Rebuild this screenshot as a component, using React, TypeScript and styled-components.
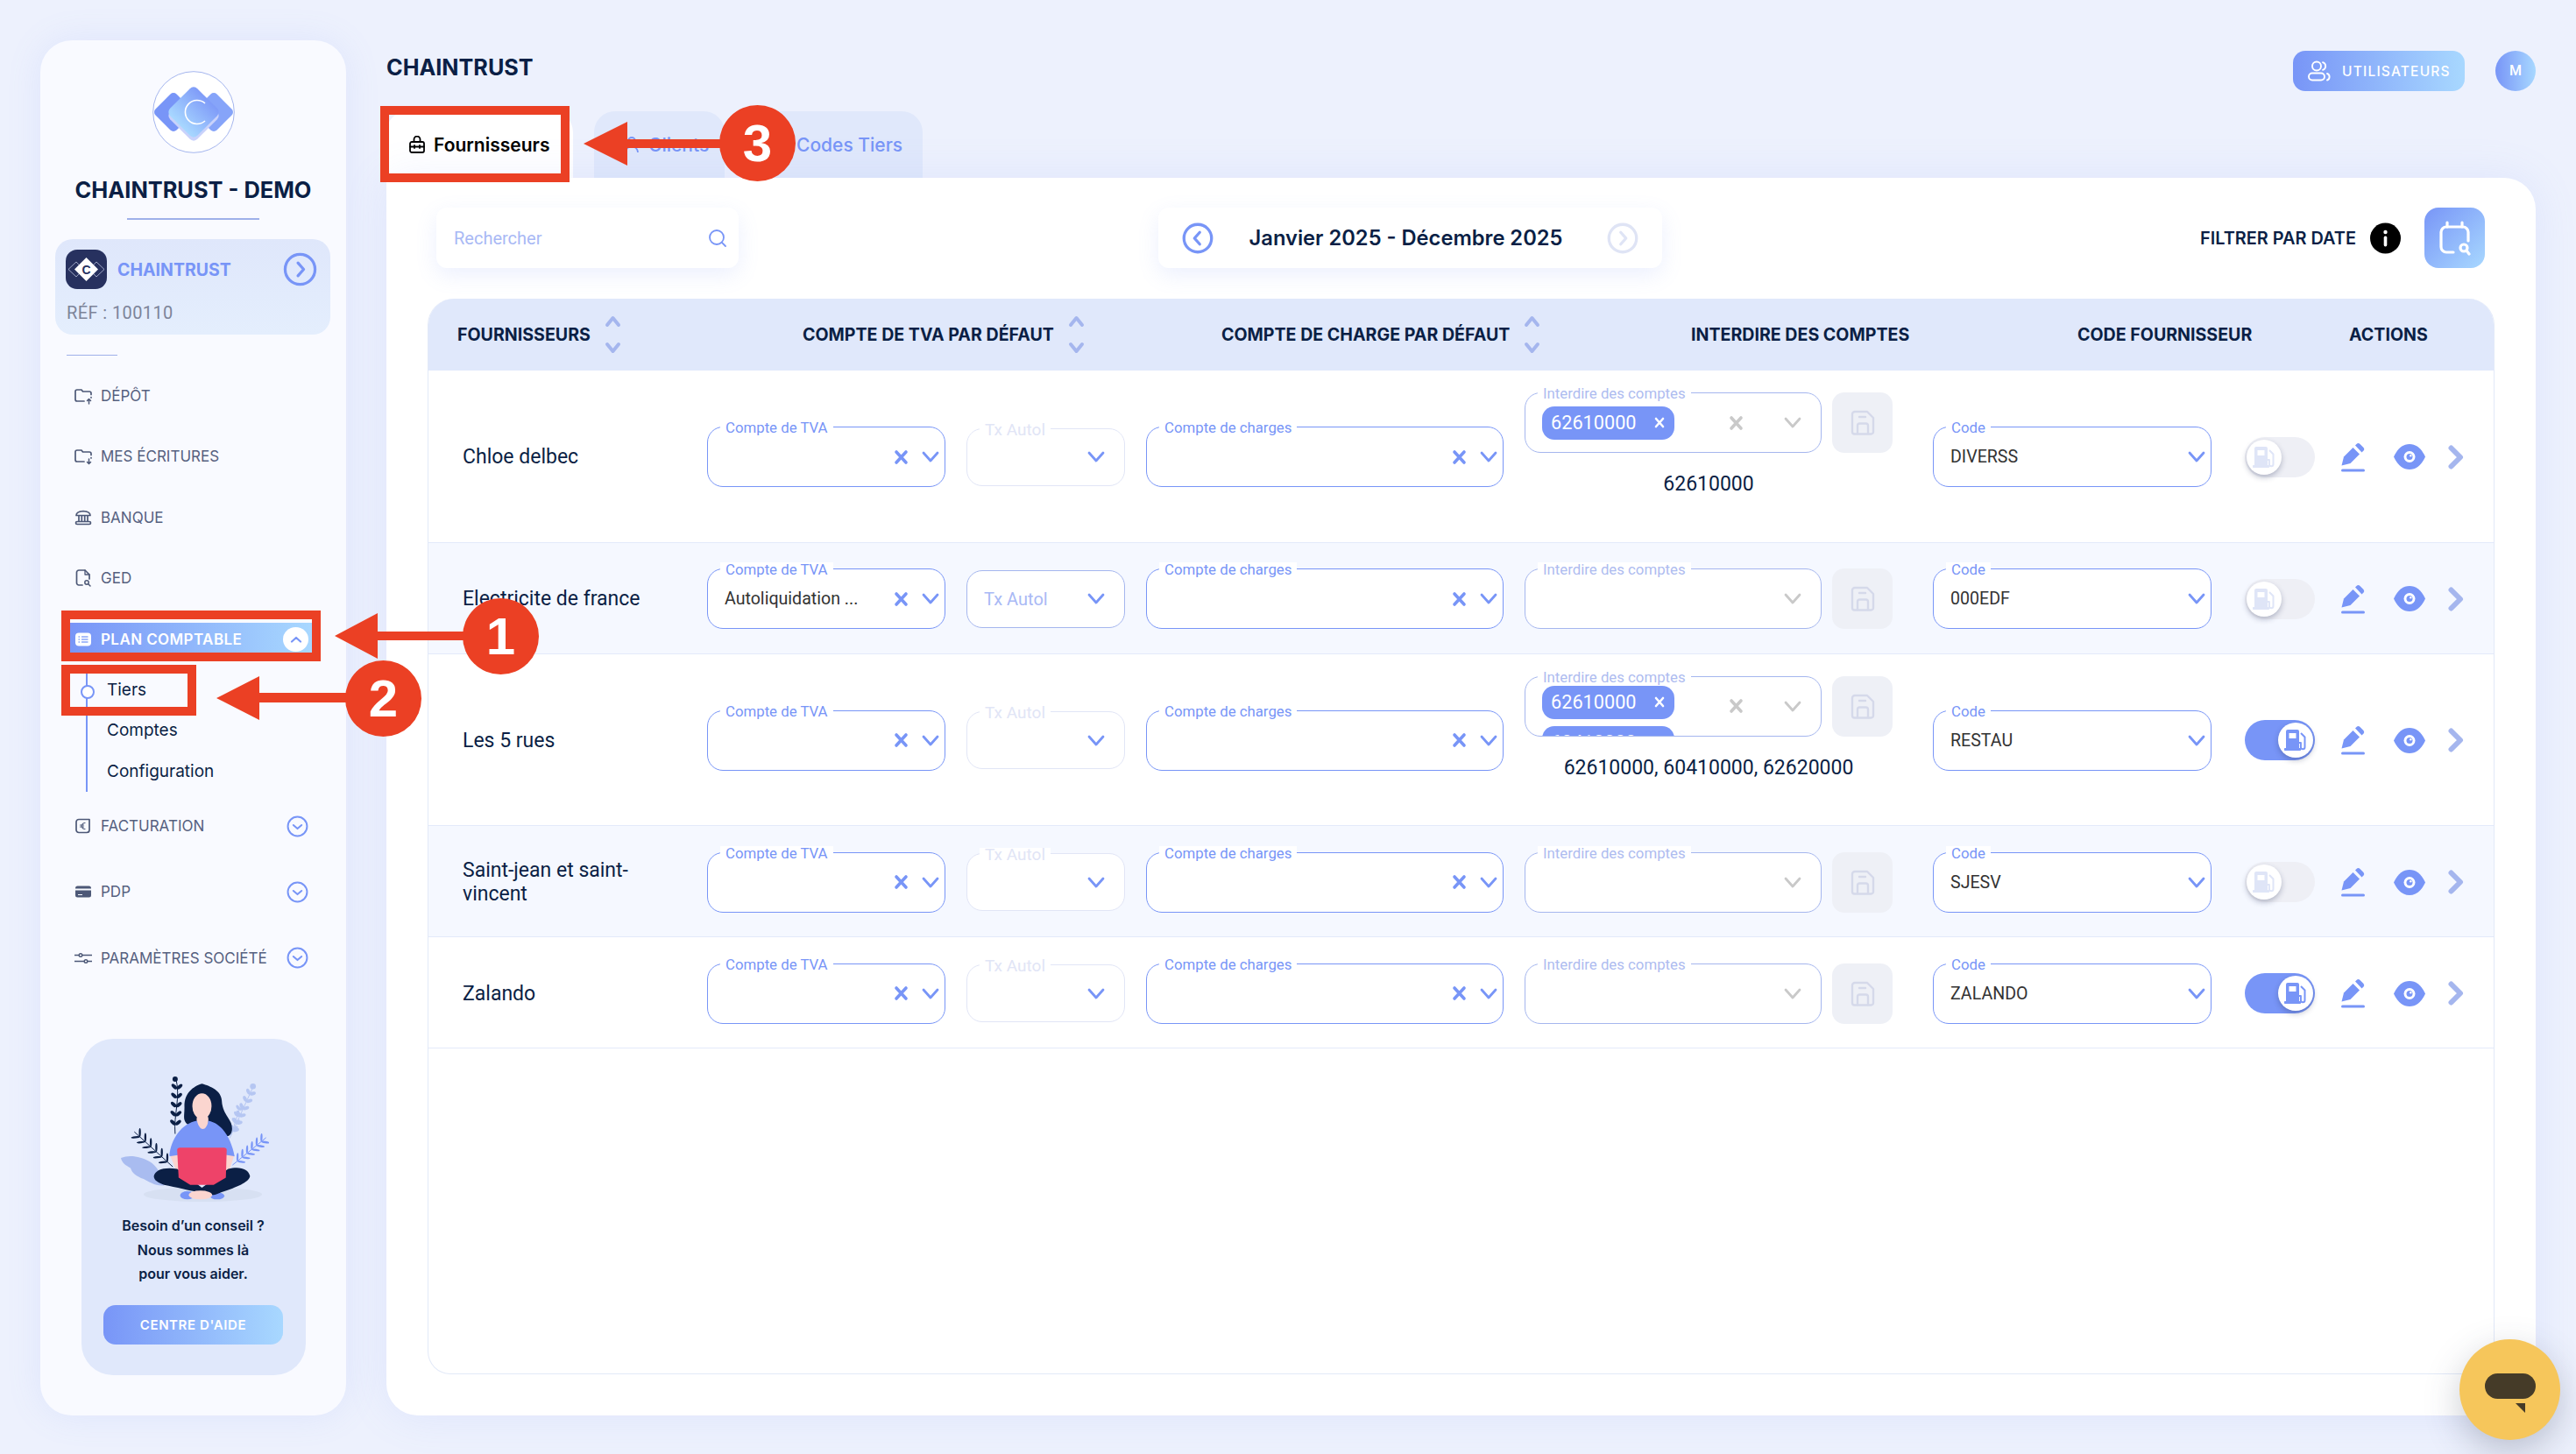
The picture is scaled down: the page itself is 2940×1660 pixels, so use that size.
import React from "react";
import styled, {createGlobalStyle} from "styled-components";
import {Search} from "lucide-react";

const BLUE = "#7895f7";
const SOFT = "#a5b6ee";
const FAINT = "#e1e5f6";
const NAVY = "#0b1f45";
const GRAD = "linear-gradient(90deg, #7895f7, #a8d8ff)";
const RED = "#eb4024";
const HEAD_FONT = `"Inter", "Liberation Sans", sans-serif`;

type Row = {
    name: string
    tva?: string
    autolActive?: boolean
    chips?: string[]
    summary?: string
    code: string
    on?: boolean
}

const rows: Row[] = [
    {name: "Chloe delbec", chips: ["62610000"], summary: "62610000", code: "DIVERSS"},
    {name: "Electricite de france", tva: "Autoliquidation ...", autolActive: true, code: "000EDF"},
    {name: "Les 5 rues", chips: ["62610000", "60410000"], summary: "62610000, 60410000, 62620000", code: "RESTAU", on: true},
    {name: "Saint-jean et saint-vincent", code: "SJESV"},
    {name: "Zalando", code: "ZALANDO", on: true},
];

/* ---------- icons ---------- */

const LogoMark = () => (
    <svg width="94" height="94" viewBox="0 0 94 94">
        <defs>
            <linearGradient id="logoMain" x1="0" y1="0" x2="0" y2="1">
                <stop offset="0" stopColor="#7f9bf8"/>
                <stop offset="1" stopColor="#a8d8ff"/>
            </linearGradient>
        </defs>
        <circle cx="47" cy="47" r="46.3" fill="#fff" stroke="#a5b6ee" strokeWidth="1"/>
        <rect x="7" y="30" width="34" height="34" rx="5" transform="rotate(45 24 47)" fill="#7895f7"/>
        <rect x="53" y="30" width="34" height="34" rx="5" transform="rotate(45 70 47)" fill="#86a4f9"/>
        <rect x="25" y="29" width="44" height="44" rx="6" transform="rotate(45 47 51)" fill="#c9d2fb"/>
        <rect x="25" y="25" width="44" height="44" rx="6" transform="rotate(45 47 47)" fill="url(#logoMain)"/>
        <path d="M60 37 A 13.5 13.5 0 1 0 60 57" fill="none" stroke="#fff" strokeWidth="1.6"/>
    </svg>
);

const CompanyMark = () => (
    <svg width="47" height="45" viewBox="0 0 47 45">
        <rect width="47" height="45" rx="13" fill="#27315f"/>
        <path d="M12 14 L3 22.500 L12 31 L20 22.500Z M35 14 L44 22.500 L35 31 L27 22.500Z" fill="none" stroke="#cfd6ee" strokeWidth="0.7"/>
        <path d="M23.500 9 L37 22.500 L23.500 36 L10 22.500Z" fill="#fff"/>
        <text x="23.500" y="27.500" textAnchor="middle" fontFamily="Liberation Sans" fontWeight="700" fontSize="14" fill="#27315f">C</text>
    </svg>
);

const CircleChevron = ({dir, size, color, stroke}: {dir: "up" | "down" | "left" | "right", size: number, color: string, stroke: number}) => {
    const paths = {
        up: "M7.500 13.500 L12 9.500 L16.500 13.500",
        down: "M7.500 10.500 L12 14.500 L16.500 10.500",
        left: "M13.500 7.500 L9.500 12 L13.500 16.500",
        right: "M10.500 7.500 L14.500 12 L10.500 16.500",
    };
    return (
        <svg width={size} height={size} viewBox="0 0 24 24" fill="none" stroke={color} strokeWidth={stroke} strokeLinecap="round" strokeLinejoin="round">
            <circle cx="12" cy="12" r="10.500"/>
            <path d={paths[dir]}/>
        </svg>
    );
};

const navStroke = {fill: "none", stroke: "#4d5877", strokeWidth: 1.7, strokeLinecap: "round", strokeLinejoin: "round"} as const;

const FolderUp = () => (
    <svg width="20" height="20" viewBox="0 0 20 20" {...navStroke}>
        <path d="M11 16H3a2 2 0 0 1-2-2V5a2 2 0 0 1 2-2h5l1.500 2H17a2 2 0 0 1 2 2v1.500"/>
        <path d="M16.500 19v-5M14.500 15.500l2-2 2 2" strokeWidth="1.500"/>
        <path d="M19 11.500v.5"/>
    </svg>
);

const FolderDown = () => (
    <svg width="20" height="20" viewBox="0 0 20 20" {...navStroke}>
        <path d="M11 16H3a2 2 0 0 1-2-2V5a2 2 0 0 1 2-2h5l1.500 2H17a2 2 0 0 1 2 2v1.500"/>
        <path d="M16.500 13v5M14.500 16.500l2 2 2-2" strokeWidth="1.500"/>
        <path d="M19 11.500v.5"/>
    </svg>
);

const BankIcon = () => (
    <svg width="20" height="20" viewBox="0 0 20 20" {...navStroke}>
        <path d="M2 7.500 Q2 3 10 2.500 Q18 3 18 7.500Z"/>
        <path d="M5 8v6M8.300 8v6M11.700 8v6M15 8v6"/>
        <rect x="1.500" y="14.500" width="17" height="3" rx="1.500"/>
    </svg>
);

const DocSearch = () => (
    <svg width="20" height="22" viewBox="0 0 20 22" {...navStroke}>
        <path d="M9 19H5a2.500 2.500 0 0 1-2.500-2.500v-12A2.500 2.500 0 0 1 5 2h7l5 5v5"/>
        <path d="M12 2v5h5" strokeWidth="1.300"/>
        <circle cx="14" cy="16" r="2.200" strokeWidth="1.500"/>
        <path d="M16 18l2 2" strokeWidth="1.500"/>
    </svg>
);

const ListIcon = () => (
    <svg width="20" height="18" viewBox="0 0 20 18">
        <rect x="1" y="1.500" width="18" height="15" rx="4" fill="#fff"/>
        <path d="M4.500 6h1.500M4.500 9h1.500M4.500 12h1.500M8 6h7.500M8 9h7.500M8 12h7.500" stroke="#8ba7f9" strokeWidth="1.500"/>
    </svg>
);

const DocEuro = () => (
    <svg width="20" height="20" viewBox="0 0 20 20" {...navStroke}>
        <path d="M5 2.500h7l5 0a1.500 1.500 0 0 1 0 0v12a3 3 0 0 1-3 3H5a3 3 0 0 1-3-3v-9a3 3 0 0 1 3-3Z"/>
        <path d="M12 6.500a3.500 3.500 0 1 0 0 7M6.500 9h4M6.500 11h4" strokeWidth="1.200"/>
    </svg>
);

const CardIcon = () => (
    <svg width="20" height="16" viewBox="0 0 20 16">
        <path d="M1 4a2.500 2.500 0 0 1 2.500-2.500h13A2.500 2.500 0 0 1 19 4v.5H1Z" fill="#4d5877"/>
        <path d="M1 6.500h18V12a2.500 2.500 0 0 1-2.500 2.500h-13A2.500 2.500 0 0 1 1 12Zm3 4.500v1h5v-1Z" fill="#4d5877" fillRule="evenodd"/>
    </svg>
);

const SliderIcon = () => (
    <svg width="20" height="14" viewBox="0 0 20 14" fill="none" stroke="#4d5877" strokeWidth="1.400">
        <path d="M0 3.500h5M9 3.500h11M0 10.500h11M15 10.500h5"/>
        <circle cx="7" cy="3.500" r="1.800"/>
        <circle cx="13" cy="10.500" r="1.800"/>
    </svg>
);

const BagIcon = () => (
    <svg width="18" height="20" viewBox="0 0 18 20" fill="none" stroke="#000" strokeWidth="1.800" strokeLinejoin="round" strokeLinecap="round">
        <path d="M5.500 7V4a3.500 3.500 0 0 1 7 0v3"/>
        <path d="M3 7h12a2 2 0 0 1 2 2v8a2 2 0 0 1-2 2H3a2 2 0 0 1-2-2V9a2 2 0 0 1 2-2Z"/>
        <path d="M1 12.500h16M6 11v3M12 11v3"/>
    </svg>
);

const UsersIcon = () => (
    <svg width="28" height="24" viewBox="0 0 28 24" fill="none" stroke="#fff" strokeWidth="1.900" strokeLinecap="round">
        <circle cx="11" cy="6.500" r="5"/>
        <rect x="2" y="14.500" width="18" height="8" rx="4"/>
        <path d="M18 2.200a4.500 4.500 0 0 1 0 8.600M23 15a4 4 0 0 1 0 7.500"/>
    </svg>
);

const CalendarSearch = () => (
    <svg width="36" height="42" viewBox="0 0 36 42" fill="none" stroke="#fff" strokeWidth="3.200" strokeLinecap="round" strokeLinejoin="round">
        <path d="M16 37H8a6 6 0 0 1-6-6V14a6 6 0 0 1 6-6h19a6 6 0 0 1 6 6v10"/>
        <path d="M9 3v5M26 3v5"/>
        <circle cx="28" cy="32" r="4"/>
        <path d="M31 35l3 4"/>
    </svg>
);

const InfoDot = () => (
    <svg width="35" height="36" viewBox="0 0 35 36">
        <circle cx="17.500" cy="18" r="17.500" fill="#000"/>
        <circle cx="17.500" cy="11" r="2.200" fill="#fff"/>
        <rect x="15.700" y="15.500" width="3.600" height="12" rx="1.800" fill="#fff"/>
    </svg>
);

const SortArrows = () => (
    <svg width="19" height="44" viewBox="0 0 19 44" fill="none" stroke="#a5b6ee" strokeWidth="4" strokeLinecap="round" strokeLinejoin="round">
        <path d="M3 11 L9.500 3 L16 11"/>
        <path d="M3 33 L9.500 41 L16 33"/>
    </svg>
);

const ClearX = ({color}: {color: string}) => (
    <svg width="17" height="18" viewBox="0 0 17 18" fill="none" stroke={color} strokeWidth="3.600" strokeLinecap="round">
        <path d="M3 3 L14 15M14 3 L3 15"/>
    </svg>
);

const Caret = ({color}: {color: string}) => (
    <svg width="20" height="13" viewBox="0 0 20 13" fill="none" stroke={color} strokeWidth="2.800" strokeLinecap="round" strokeLinejoin="round">
        <path d="M2 2 L10 11 L18 2"/>
    </svg>
);

const ChipX = () => (
    <svg width="12" height="13" viewBox="0 0 12 13" fill="none" stroke="#fff" strokeWidth="2.600" strokeLinecap="round">
        <path d="M2 2 L10 11M10 2 L2 11"/>
    </svg>
);

const SaveIcon = () => (
    <svg width="28" height="29" viewBox="0 0 28 29" fill="none" stroke="#d5d9ea" strokeWidth="2.400" strokeLinejoin="round" strokeLinecap="round">
        <path d="M5 2h14l7 7v16a2.500 2.500 0 0 1-2.500 2.500h-19A2.500 2.500 0 0 1 2 25V5a3 3 0 0 1 3-3Z"/>
        <path d="M8 27V18a2.500 2.500 0 0 1 2.500-2.500h7A2.500 2.500 0 0 1 20 18v9"/>
        <path d="M10 8h7"/>
    </svg>
);

const FuelIcon = ({color}: {color: string}) => (
    <svg width="28" height="28" viewBox="0 0 28 28" fill="none">
        <path d="M5 2h11a2 2 0 0 1 2 2v19H3V4a2 2 0 0 1 2-2Zm1.500 4v6h8V6Z" fill={color} fillRule="evenodd"/>
        <rect x="1" y="23" width="19" height="3" rx="0.800" fill={color}/>
        <path d="M20 6l4.500 4.500V22a2.300 2.300 0 0 1-4.600 0v-5H18" stroke={color} strokeWidth="2" strokeLinejoin="round"/>
    </svg>
);

const PencilIcon = () => (
    <svg width="27" height="34" viewBox="0 0 27 34" fill={BLUE}>
        <path d="M0.500 26.500 L3 16.500 L13.500 6 L21 13.500 L10.500 24 Z"/>
        <path d="M16 3.500 L17.500 2 Q19.500 0 21.500 2 L25.500 6 Q27 8 25.500 9.500 L23.500 11.500 Z"/>
        <rect x="0" y="30.500" width="27" height="3" rx="1.500"/>
    </svg>
);

const EyeIcon = () => (
    <svg width="36" height="29" viewBox="0 0 36 29">
        <path d="M0 14.500 C5 4 11 0 18 0 C25 0 31 4 36 14.500 C31 25 25 29 18 29 C11 29 5 25 0 14.500Z" fill={BLUE}/>
        <circle cx="18" cy="14.500" r="6.500" fill="#fff"/>
        <circle cx="18" cy="14.500" r="3.500" fill={BLUE}/>
        <circle cx="19.300" cy="13.200" r="1.200" fill="#fff"/>
    </svg>
);

const RowChevron = () => (
    <svg width="18" height="28" viewBox="0 0 18 28" fill="none" stroke="#a5b6ee" strokeWidth="6" strokeLinecap="round" strokeLinejoin="round">
        <path d="M3.500 3.500 L14 14 L3.500 24.500"/>
    </svg>
);

const sprigs = (x1: number, y1: number, x2: number, y2: number, count: number, len: number, fat: number, color: string) => {
    const dx = x2 - x1;
    const dy = y2 - y1;
    const base = Math.atan2(dy, dx) * 180 / Math.PI;
    return Array.from({length: count}, (_, i) => {
        const t = (i + 1) / (count + 1);
        const cx = x1 + dx * t;
        const cy = y1 + dy * t;
        return [-48, 48].map(a => (
            <ellipse key={`${i}${a}`} cx={len} cy={0} rx={len} ry={fat} fill={color}
                     transform={`translate(${cx} ${cy}) rotate(${base + a})`}/>
        ));
    });
};

const HelpArt = () => (
    <svg width="173" height="153" viewBox="40 70 520 460">
        <ellipse cx="333" cy="493" rx="203" ry="25" fill="#d7e0f2"/>
        <path d="M52 368 C80 355 120 362 150 380 C175 395 190 420 200 462 C170 465 150 450 130 440 C105 430 90 420 85 402 C70 395 55 385 52 368Z" fill="#a9bcf0"/>
        <path d="M425 300 L505 125" stroke="#b5c6f2" strokeWidth="3"/>
        {sprigs(425, 300, 505, 125, 6, 11, 6, "#b5c6f2")}
        <circle cx="505" cy="122" r="10" fill="#b5c6f2"/>
        <path d="M430 290 L465 180" stroke="#b5c6f2" strokeWidth="3"/>
        {sprigs(430, 290, 465, 180, 4, 9, 5, "#b5c6f2")}
        <path d="M435 392 L550 298" stroke={BLUE} strokeWidth="3"/>
        {sprigs(435, 392, 550, 298, 6, 14, 3.500, BLUE)}
        <path d="M230 398 L98 278" stroke={NAVY} strokeWidth="3"/>
        {sprigs(230, 398, 98, 278, 6, 15, 3.500, NAVY)}
        <path d="M238 285 C232 220 258 160 240 92" stroke={NAVY} strokeWidth="3" fill="none"/>
        {sprigs(238, 285, 245, 100, 5, 12, 6, NAVY)}
        <circle cx="238" cy="97" r="9" fill={NAVY}/>
        <path d="M330 113 C300 122 268 145 270 195 C270 225 262 240 285 255 L410 292 C432 298 438 270 430 248 C420 225 400 210 398 170 C395 135 360 122 330 113Z" fill={NAVY}/>
        <ellipse cx="330" cy="190" rx="33" ry="44" fill="#fbd5cf"/>
        <rect x="312" y="215" width="40" height="55" rx="18" fill="#fbd5cf"/>
        <path d="M218 360 C225 300 260 250 313 240 C322 278 345 278 352 240 C400 250 430 300 442 362 L410 372 L250 372Z" fill={BLUE}/>
        <path d="M222 362 L252 357 L262 420 L245 420Z M440 362 L412 357 L402 420 L420 420Z" fill="#fbd5cf"/>
        <ellipse cx="280" cy="496" rx="25" ry="14" fill={BLUE}/>
        <ellipse cx="382" cy="498" rx="25" ry="12" fill={BLUE}/>
        <path d="M165 430 C170 408 200 398 245 405 L330 470 L420 405 C460 395 490 405 495 430 C490 455 440 470 385 490 C365 498 355 495 345 485 L320 485 C290 480 240 468 200 460 C180 452 165 445 165 430Z" fill={NAVY}/>
        <ellipse cx="325" cy="495" rx="40" ry="15" fill="#fbd5cf"/>
        <path d="M245 340 Q245 332 255 332 L405 332 Q415 332 415 340 L412 435 L370 460 L290 460 L250 435Z" fill="#ee4369"/>
    </svg>
);

/* ---------- page ---------- */

export default function App() {
    return (
        <>
            <GlobalStyle/>
            <Page>
                <Sidebar>
                    <LogoMark/>
                    <BrandTitle>CHAINTRUST - DEMO</BrandTitle>
                    <BrandRule/>
                    <CompanyCard>
                        <CompanyTop>
                            <CompanyMark/>
                            <CompanyName>CHAINTRUST</CompanyName>
                            <CircleChevron dir="right" size={39} color={BLUE} stroke={2}/>
                        </CompanyTop>
                        <CompanyRef>RÉF : 100110</CompanyRef>
                    </CompanyCard>
                    <ShortRule/>
                    <NavList $gap={31.4} $top={27}>
                        <NavItem><NavIcon><FolderUp/></NavIcon><NavLabel>DÉPÔT</NavLabel></NavItem>
                        <NavItem><NavIcon><FolderDown/></NavIcon><NavLabel>MES ÉCRITURES</NavLabel></NavItem>
                        <NavItem><NavIcon><BankIcon/></NavIcon><NavLabel>BANQUE</NavLabel></NavItem>
                        <NavItem><NavIcon><DocSearch/></NavIcon><NavLabel>GED</NavLabel></NavItem>
                        <NavItem $active>
                            <NavIcon><ListIcon/></NavIcon>
                            <NavLabel $active>PLAN COMPTABLE</NavLabel>
                            <OpenPill>
                                <svg width="14" height="8" viewBox="0 0 14 8" fill="none" stroke={BLUE} strokeWidth="2.200" strokeLinecap="round" strokeLinejoin="round">
                                    <path d="M2 6.500 L7 2 L12 6.500"/>
                                </svg>
                            </OpenPill>
                        </NavItem>
                    </NavList>
                    <SubMenu>
                        <SubItem $current>Tiers</SubItem>
                        <SubItem>Comptes</SubItem>
                        <SubItem>Configuration</SubItem>
                    </SubMenu>
                    <NavList $gap={37.4} $top={20}>
                        <NavItem>
                            <NavIcon><DocEuro/></NavIcon><NavLabel>FACTURATION</NavLabel>
                            <NavCaret><CircleChevron dir="down" size={25} color={BLUE} stroke={1.900}/></NavCaret>
                        </NavItem>
                        <NavItem>
                            <NavIcon><CardIcon/></NavIcon><NavLabel>PDP</NavLabel>
                            <NavCaret><CircleChevron dir="down" size={25} color={BLUE} stroke={1.900}/></NavCaret>
                        </NavItem>
                        <NavItem>
                            <NavIcon><SliderIcon/></NavIcon><NavLabel>PARAMÈTRES SOCIÉTÉ</NavLabel>
                            <NavCaret><CircleChevron dir="down" size={25} color={BLUE} stroke={1.900}/></NavCaret>
                        </NavItem>
                    </NavList>
                    <HelpCard>
                        <HelpArt/>
                        <HelpText>Besoin d’un conseil ?<br/>Nous sommes là<br/>pour vous aider.</HelpText>
                        <HelpButton>CENTRE D'AIDE</HelpButton>
                    </HelpCard>
                </Sidebar>

                <Main>
                    <TopBar>
                        <PageTitle>CHAINTRUST</PageTitle>
                        <UsersButton><UsersIcon/>UTILISATEURS</UsersButton>
                        <Avatar>M</Avatar>
                    </TopBar>
                    <Tabs>
                        <Tab $active $w={213} $pad={26}><BagIcon/>Fournisseurs</Tab>
                        <Tab $w={149} $pad={34}>
                            <svg width="18" height="20" viewBox="0 0 18 20" fill="none" stroke={BLUE} strokeWidth="1.800"><circle cx="9" cy="6" r="4"/><path d="M2 19a7 7 0 0 1 14 0"/></svg>
                            Clients
                        </Tab>
                        <Tab $w={202} $pad={30}>
                            <svg width="18" height="20" viewBox="0 0 18 20" fill="none" stroke={BLUE} strokeWidth="1.800"><rect x="2" y="2" width="14" height="16" rx="3"/></svg>
                            Codes Tiers
                        </Tab>
                    </Tabs>
                    <Panel>
                        <Toolbar>
                            <SearchBox>
                                <SearchHint>Rechercher</SearchHint>
                                <Search size={24} color={BLUE} strokeWidth={1.800}/>
                            </SearchBox>
                            <DateBox>
                                <CircleChevron dir="left" size={36} color={BLUE} stroke={2.200}/>
                                <DateText>Janvier 2025 - Décembre 2025</DateText>
                                <CircleChevron dir="right" size={36} color="#dfe4f5" stroke={2.200}/>
                            </DateBox>
                            <FilterGroup>
                                <FilterLabel>FILTRER PAR DATE</FilterLabel>
                                <InfoDot/>
                                <CalendarButton><CalendarSearch/></CalendarButton>
                            </FilterGroup>
                        </Toolbar>
                        <Table>
                            <HeadRow>
                                <HeadCell>FOURNISSEURS<SortArrows/></HeadCell>
                                <HeadCell>COMPTE DE TVA PAR DÉFAUT<SortArrows/></HeadCell>
                                <HeadCell>COMPTE DE CHARGE PAR DÉFAUT<SortArrows/></HeadCell>
                                <HeadCell>INTERDIRE DES COMPTES</HeadCell>
                                <HeadCell>CODE FOURNISSEUR</HeadCell>
                                <HeadCell>ACTIONS</HeadCell>
                            </HeadRow>
                            {rows.map((row, i) => (
                                <BodyRow key={row.name} $odd={i % 2 === 1}>
                                    <NameCell>{row.name}</NameCell>
                                    <Field $w={272} $tone="active">
                                        <FieldLabel $tone="active">Compte de TVA</FieldLabel>
                                        <FieldValue>{row.tva}</FieldValue>
                                        <ClearX color={BLUE}/>
                                        <Caret color={BLUE}/>
                                    </Field>
                                    <Field $w={181} $h={66} $padR={22} $tone={row.autolActive ? "soft" : "faint"}>
                                        {row.autolActive
                                            ? <FieldValue $hint>Tx Autol</FieldValue>
                                            : <><FieldLabel $tone="faint" $big>Tx Autol</FieldLabel><FieldValue/></>}
                                        <Caret color={BLUE}/>
                                    </Field>
                                    <Field $w={408} $tone="active">
                                        <FieldLabel $tone="active">Compte de charges</FieldLabel>
                                        <FieldValue/>
                                        <ClearX color={BLUE}/>
                                        <Caret color={BLUE}/>
                                    </Field>
                                    <BlockCell>
                                        <BlockLine>
                                            <Field $w={339} $padR={22} $tone="soft">
                                                <FieldLabel $tone="soft">Interdire des comptes</FieldLabel>
                                                <ChipArea $stack={(row.chips?.length ?? 0) > 1}>
                                                    {row.chips?.map(c => <Chip key={c}>{c}<ChipX/></Chip>)}
                                                </ChipArea>
                                                {row.chips && <ClearSpacer><ClearX color="#c9c9c9"/></ClearSpacer>}
                                                <Caret color="#c9c9c9"/>
                                            </Field>
                                            <SaveButton><SaveIcon/></SaveButton>
                                        </BlockLine>
                                        {row.summary && <BlockSummary>{row.summary}</BlockSummary>}
                                    </BlockCell>
                                    <Field $w={318} $tone="active">
                                        <FieldLabel $tone="active">Code</FieldLabel>
                                        <FieldValue>{row.code}</FieldValue>
                                        <Caret color={BLUE}/>
                                    </Field>
                                    <Actions>
                                        <Toggle $on={row.on}>
                                            <Knob $on={row.on}><FuelIcon color={row.on ? BLUE : "#dfe5f7"}/></Knob>
                                        </Toggle>
                                        <PencilIcon/>
                                        <EyeIcon/>
                                        <RowChevron/>
                                    </Actions>
                                </BodyRow>
                            ))}
                        </Table>
                    </Panel>
                </Main>

                <RedBox $x={70} $y={697} $w={296} $h={58}/>
                <RedBox $x={70} $y={759} $w={154} $h={58}/>
                <RedBox $x={434} $y={121} $w={216} $h={87}/>

                <Arrow $x={382} $y={700} width="160" height="52" viewBox="0 0 160 52">
                    <polygon points="0,26 49,0 49,21 160,21 160,31 49,31 49,52"/>
                </Arrow>
                <Arrow $x={247} $y={772} width="165" height="50" viewBox="0 0 165 50">
                    <polygon points="0,25 49,0 49,19 165,19 165,30 49,30 49,50"/>
                </Arrow>
                <Arrow $x={666} $y={139} width="164" height="50" viewBox="0 0 164 50">
                    <polygon points="0,25 50,0 50,20 164,20 164,30 50,30 50,50"/>
                </Arrow>

                <Badge $x={528} $y={683}>1</Badge>
                <Badge $x={394} $y={754}>2</Badge>
                <Badge $x={821} $y={120}>3</Badge>

                <ChatBubble>
                    <svg width="58" height="46" viewBox="0 0 58 46">
                        <rect width="58" height="29" rx="14.500" fill="#453b28"/>
                        <polygon points="35,34 46,34 46,45" fill="#453b28"/>
                    </svg>
                </ChatBubble>
            </Page>
        </>
    );
}

/* ---------- styles ---------- */

const GlobalStyle = createGlobalStyle`
  html, body {
    margin: 0;
    padding: 0;
  }
  body {
    font-family: "Roboto", "Liberation Sans", sans-serif;
    color: ${NAVY};
  }
  * {
    box-sizing: border-box;
  }
`

const Page = styled.div`
  position: relative;
  display: flex;
  gap: 46px;
  width: 2940px;
  height: 1660px;
  padding: 46px 46px 44px;
  overflow: hidden;
  background: #edf1fd;
`

const Sidebar = styled.aside`
  flex: 0 0 349px;
  display: flex;
  flex-direction: column;
  align-items: center;
  padding-top: 35px;
  background: #f9faff;
  border-radius: 36px;
  box-shadow: 0 0 40px rgba(120, 149, 247, 0.12);
`

const BrandTitle = styled.div`
  margin-top: 27px;
  font-family: ${HEAD_FONT};
  font-size: 25.4px;
  line-height: 30px;
  font-weight: 700;
  color: ${NAVY};
`

const BrandRule = styled.div`
  width: 151px;
  height: 2px;
  margin-top: 17px;
  background: #9fb0ea;
`

const CompanyCard = styled.div`
  align-self: flex-start;
  width: 314px;
  height: 109px;
  margin: 22px 0 0 17px;
  padding: 12px 15px 0 12px;
  border-radius: 20px;
  background: linear-gradient(180deg, #dfe7fb, #e4eefd);
`

const CompanyTop = styled.div`
  display: flex;
  align-items: center;
  gap: 12px;
`

const CompanyName = styled.div`
  flex: 1;
  font-family: ${HEAD_FONT};
  font-size: 19.5px;
  font-weight: 700;
  color: ${BLUE};
`

const CompanyRef = styled.div`
  margin: 15px 0 0 1px;
  font-size: 20px;
  line-height: 24px;
  letter-spacing: 0.4px;
  color: #7d8499;
`

const ShortRule = styled.div`
  align-self: flex-start;
  width: 58px;
  height: 1px;
  margin: 23px 0 0 30px;
  background: #9fb0ea;
`

const NavList = styled.div<{$gap: number, $top: number}>`
  align-self: flex-start;
  display: flex;
  flex-direction: column;
  gap: ${p => p.$gap}px;
  width: 276px;
  margin: ${p => p.$top}px 0 0 34px;
`

const NavItem = styled.div<{$active?: boolean}>`
  display: flex;
  align-items: center;
  gap: 10px;
  height: 38px;
  padding: 0 4px 0 5px;
  background: ${p => p.$active ? GRAD : "transparent"};
`

const NavIcon = styled.span`
  display: flex;
  justify-content: center;
  width: 20px;
`

const NavLabel = styled.span<{$active?: boolean}>`
  flex: 1;
  font-family: ${HEAD_FONT};
  font-size: 17px;
  font-weight: ${p => p.$active ? 600 : 400};
  letter-spacing: ${p => p.$active ? 0.4 : 0}px;
  white-space: nowrap;
  color: ${p => p.$active ? "#fff" : "#56617f"};
`

const OpenPill = styled.span`
  display: flex;
  align-items: center;
  justify-content: center;
  width: 29px;
  height: 28px;
  border-radius: 50%;
  background: #fff;
`

const NavCaret = styled.span`
  display: flex;
`

const SubMenu = styled.div`
  align-self: flex-start;
  display: flex;
  flex-direction: column;
  width: 220px;
  margin: 16px 0 0 52px;
  border-left: 2px solid ${BLUE};
`

const SubItem = styled.div<{$current?: boolean}>`
  position: relative;
  height: 46.5px;
  line-height: 46.5px;
  padding-left: 22px;
  font-family: ${HEAD_FONT};
  font-size: 19px;
  color: ${NAVY};

  ${p => p.$current && `
    &::before {
      content: "";
      position: absolute;
      left: -8px;
      top: 17px;
      width: 12px;
      height: 12px;
      border: 2px solid ${BLUE};
      border-radius: 50%;
      background: #fff;
    }
  `}
`

const HelpCard = styled.div`
  display: flex;
  flex-direction: column;
  align-items: center;
  width: 256px;
  height: 384px;
  margin-top: auto;
  margin-bottom: 46px;
  padding-top: 37px;
  border-radius: 36px;
  background: #e0e8fb;
`

const HelpText = styled.div`
  margin-top: 10px;
  font-family: ${HEAD_FONT};
  font-size: 16px;
  font-weight: 600;
  line-height: 27.5px;
  text-align: center;
  color: ${NAVY};
`

const HelpButton = styled.div`
  width: 205px;
  height: 45px;
  margin-top: 21px;
  border-radius: 14px;
  background: ${GRAD};
  font-family: ${HEAD_FONT};
  font-size: 15px;
  font-weight: 600;
  line-height: 45px;
  letter-spacing: 0.6px;
  text-align: center;
  color: #fff;
`

const Main = styled.main`
  flex: 1;
  min-width: 0;
  display: flex;
  flex-direction: column;
`

const TopBar = styled.header`
  display: flex;
  align-items: center;
  height: 46px;
  margin-top: 12px;
`

const PageTitle = styled.h1`
  flex: 1;
  margin: 0 0 8px;
  font-family: ${HEAD_FONT};
  font-size: 25.2px;
  font-weight: 700;
  color: ${NAVY};
`

const UsersButton = styled.div`
  display: flex;
  align-items: center;
  gap: 12px;
  width: 196px;
  height: 46px;
  padding-left: 16px;
  border-radius: 14px;
  background: ${GRAD};
  font-family: ${HEAD_FONT};
  font-size: 15.5px;
  font-weight: 500;
  letter-spacing: 1.200px;
  color: #fff;
`

const Avatar = styled.div`
  width: 46px;
  height: 46px;
  margin-left: 35px;
  border-radius: 50%;
  background: ${GRAD};
  font-size: 16px;
  font-weight: 500;
  line-height: 46px;
  text-align: center;
  color: #fff;
`

const Tabs = styled.div`
  display: flex;
  gap: 24px;
  height: 76px;
  margin-top: 23px;
`

const Tab = styled.div<{$active?: boolean, $w: number, $pad: number}>`
  display: flex;
  align-items: center;
  gap: 10px;
  width: ${p => p.$w}px;
  padding-left: ${p => p.$pad}px;
  border-radius: 24px 24px 0 0;
  background: ${p => p.$active ? "#fff" : "#e0e8fb"};
  font-family: ${HEAD_FONT};
  font-size: 21px;
  font-weight: ${p => p.$active ? 600 : 500};
  color: ${p => p.$active ? "#000" : BLUE};
`

const Panel = styled.section`
  flex: 1;
  min-height: 0;
  display: flex;
  flex-direction: column;
  padding: 34px 47px 47px;
  background: #fff;
  border-radius: 0 36px 36px 36px;
  box-shadow: 0 0 50px rgba(120, 149, 247, 0.12);
`

const Toolbar = styled.div`
  display: flex;
  align-items: center;
  height: 69px;
  padding: 0 11px 0 10px;
`

const floatingBox = `
  height: 69px;
  background: #fff;
  border-radius: 12px;
  box-shadow: 0 8px 24px rgba(120, 149, 247, 0.14);
`

const SearchBox = styled.div`
  ${floatingBox}
  display: flex;
  align-items: center;
  justify-content: space-between;
  width: 345px;
  padding: 0 12px 0 20px;
`

const SearchHint = styled.span`
  font-size: 20px;
  color: #a9b9f5;
`

const DateBox = styled.div`
  ${floatingBox}
  display: flex;
  align-items: center;
  justify-content: space-between;
  width: 575px;
  margin-left: 479px;
  padding: 0 27px;
`

const DateText = styled.span`
  margin-right: 10px;
  font-family: ${HEAD_FONT};
  font-size: 23.7px;
  font-weight: 600;
  color: ${NAVY};
`

const FilterGroup = styled.div`
  display: flex;
  align-items: center;
  margin-left: auto;
`

const FilterLabel = styled.span`
  margin-right: 16px;
  font-family: ${HEAD_FONT};
  font-size: 19.9px;
  font-weight: 600;
  color: ${NAVY};
`

const CalendarButton = styled.div`
  display: flex;
  align-items: center;
  justify-content: center;
  width: 69px;
  height: 69px;
  margin-left: 27px;
  border-radius: 16px;
  background: linear-gradient(135deg, #7895f7, #a8d8ff);
`

const Table = styled.div`
  flex: 1;
  margin-top: 35px;
  border: 1px solid #e2e9f8;
  border-top: 0;
  border-radius: 30px 30px 26px 26px;
  overflow: hidden;
`

const HeadRow = styled.div`
  display: grid;
  grid-template-columns: 394px 478px 536px 441px 310px 1fr;
  align-items: center;
  height: 82px;
  padding-left: 33px;
  background: #e0e8fb;
`

const HeadCell = styled.div`
  display: flex;
  align-items: center;
  gap: 16px;
  font-family: ${HEAD_FONT};
  font-size: 19.6px;
  font-weight: 700;
  white-space: nowrap;
  color: ${NAVY};
`

const BodyRow = styled.div<{$odd: boolean}>`
  display: flex;
  align-items: center;
  gap: 24px;
  min-height: 127px;
  padding: 25px 0 23px 39px;
  border-bottom: 1.5px solid #e3eafa;
  background: ${p => p.$odd ? "#f5f8ff" : "#fff"};
`

const NameCell = styled.div`
  flex: 0 0 255px;
  padding-right: 25px;
  font-size: 23px;
  line-height: 27px;
  color: ${NAVY};
`

type Tone = "active" | "soft" | "faint"

const toneColor = (t: Tone) => t === "active" ? BLUE : t === "soft" ? SOFT : FAINT

const Field = styled.div<{$w: number, $h?: number, $padR?: number, $tone: Tone}>`
  position: relative;
  flex: 0 0 ${p => p.$w}px;
  display: flex;
  align-items: center;
  gap: 15px;
  width: ${p => p.$w}px;
  height: ${p => p.$h ?? 69}px;
  padding: 0 ${p => p.$padR ?? 6}px 0 19px;
  border: 1.500px solid ${p => toneColor(p.$tone)};
  border-radius: 18px;
  background: #fff;
`

const FieldLabel = styled.span<{$tone: Tone, $big?: boolean}>`
  position: absolute;
  top: ${p => p.$big ? -7 : -8}px;
  left: 14px;
  padding: 0 6px;
  background: #fff;
  font-size: ${p => p.$big ? 19 : 16.8}px;
  line-height: 16px;
  color: ${p => p.$tone === "soft" ? "#aebcf0" : toneColor(p.$tone)};
`

const FieldValue = styled.span<{$hint?: boolean}>`
  flex: 1;
  font-size: ${p => p.$hint ? 20 : 19.6}px;
  color: ${p => p.$hint ? "#a9b9f5" : "#333"};
`

const ChipArea = styled.div<{$stack?: boolean}>`
  flex: 1;
  align-self: stretch;
  display: flex;
  flex-direction: column;
  justify-content: ${p => p.$stack ? "flex-start" : "center"};
  align-items: flex-start;
  gap: 8px;
  overflow: hidden;
  padding-top: ${p => p.$stack ? 10 : 0}px;
`

const Chip = styled.div`
  flex: none;
  display: flex;
  align-items: center;
  justify-content: space-between;
  width: 151px;
  height: 38px;
  padding: 0 11px 0 10px;
  border-radius: 14px;
  background: ${BLUE};
  font-size: 21.7px;
  color: #fff;
`

const ClearSpacer = styled.span`
  display: flex;
  margin-right: 31px;
`

const BlockCell = styled.div`
  flex: 0 0 442px;
`

const BlockLine = styled.div`
  display: flex;
  gap: 12px;
`

const SaveButton = styled.div`
  display: flex;
  align-items: center;
  justify-content: center;
  width: 69px;
  height: 69px;
  border-radius: 14px;
  background: #eef0f6;
`

const BlockSummary = styled.div`
  width: 420px;
  margin: 24px 0 30.5px;
  font-size: 23px;
  line-height: 24px;
  text-align: center;
  color: ${NAVY};
`

const Actions = styled.div`
  display: flex;
  align-items: center;
  gap: 30px;
  margin-left: 14px;

  & > svg:nth-child(3) {
    margin-left: 3px;
  }
  & > svg:nth-child(4) {
    margin-left: -4px;
  }
`

const Toggle = styled.div<{$on?: boolean}>`
  display: flex;
  justify-content: ${p => p.$on ? "flex-end" : "flex-start"};
  align-items: center;
  width: 80px;
  height: 46px;
  padding: 0 2px;
  border-radius: 23px;
  background: ${p => p.$on ? BLUE : "#eeeff5"};
`

const Knob = styled.div<{$on?: boolean}>`
  display: flex;
  align-items: center;
  justify-content: center;
  width: 40px;
  height: 40px;
  border-radius: 50%;
  background: #fff;
  box-shadow: 0 3px 6px rgba(40, 50, 90, 0.3);
`

const RedBox = styled.div<{$x: number, $y: number, $w: number, $h: number}>`
  position: absolute;
  left: ${p => p.$x}px;
  top: ${p => p.$y}px;
  width: ${p => p.$w}px;
  height: ${p => p.$h}px;
  border: 10px solid ${RED};
`

const Arrow = styled.svg<{$x: number, $y: number}>`
  position: absolute;
  left: ${p => p.$x}px;
  top: ${p => p.$y}px;
  fill: ${RED};
`

const Badge = styled.div<{$x: number, $y: number}>`
  position: absolute;
  left: ${p => p.$x}px;
  top: ${p => p.$y}px;
  width: 87px;
  height: 87px;
  border-radius: 50%;
  background: ${RED};
  font-family: "Liberation Sans", sans-serif;
  font-size: 60px;
  font-weight: 700;
  line-height: 87px;
  text-align: center;
  color: #fff;
`

const ChatBubble = styled.div`
  position: absolute;
  left: 2807px;
  top: 1529px;
  display: flex;
  align-items: center;
  justify-content: center;
  width: 115px;
  height: 115px;
  padding-top: 8px;
  border-radius: 50%;
  background: #f6c65b;
  box-shadow: 0 14px 40px rgba(60, 70, 90, 0.28);
`
